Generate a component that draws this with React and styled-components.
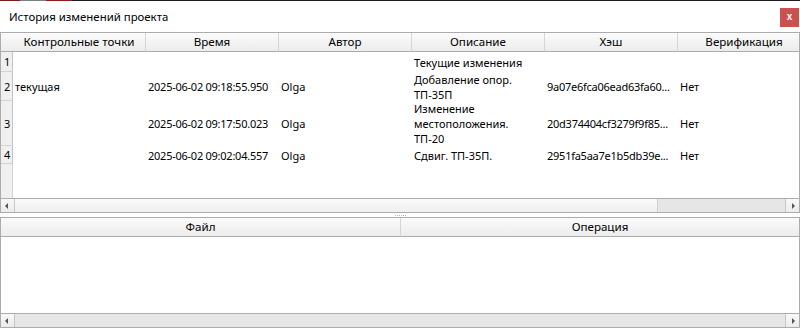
import React from 'react';
import styled, { createGlobalStyle } from 'styled-components';

const GlobalStyle = createGlobalStyle`
  html, body {
    margin: 0;
    padding: 0;
    background: #fff;
  }
  body {
    font-family: "Noto Sans", "Segoe UI", sans-serif;
    font-size: 11px;
    color: #000;
  }
`;

const Window = styled.div`
  width: 800px;
  height: 328px;
  display: flex;
  flex-direction: column;
  overflow: hidden;
  background: #fff;
`;

const AccentStrip = styled.div`
  display: flex;
  height: 1px;
  flex-shrink: 0;
`;

const AccentSegment = styled.div`
  width: ${(p) => p.$w || 0}px;
  flex: ${(p) => (p.$grow ? 1 : 'none')};
  background: ${(p) => p.$color};
`;

const TitleBar = styled.div`
  height: 31px;
  flex-shrink: 0;
  display: flex;
  align-items: center;
  justify-content: space-between;
  padding: 0 1px 0 9px;
`;

const Title = styled.span`
  font-size: 11.4px;
  margin-top: -1px;
`;

const CloseButton = styled.button`
  width: 19px;
  height: 19px;
  margin-top: 2px;
  padding: 0 0 2px;
  border: none;
  background: #c9514f;
  color: #fff;
  font: bold 10px "Liberation Sans", Arial, sans-serif;
  display: flex;
  align-items: center;
  justify-content: center;
`;

const Pane = styled.div`
  height: ${(p) => p.$h}px;
  flex-shrink: 0;
  box-sizing: border-box;
  border: 1px solid #acacac;
  display: flex;
  flex-direction: column;
`;

const Viewport = styled.div`
  flex: 1;
  overflow: hidden;
  background: ${(p) =>
    p.$vheader
      ? 'linear-gradient(to right, #f0f0f0 0, #f0f0f0 11px, #d4d4d4 11px, #d4d4d4 12px, #fff 12px)'
      : '#fff'};
`;

const Grid = styled.div`
  display: grid;
  grid-template-columns: ${(p) => p.$cols};
  width: max-content;
`;

const HeaderCell = styled.div`
  height: 17px;
  border-bottom: 1px solid #acacac;
  border-right: ${(p) => (p.$plain ? 'none' : '1px solid #d5d5d5')};
  background: linear-gradient(to bottom, #fbfbfb, #ececec);
  display: flex;
  align-items: center;
  justify-content: center;
  white-space: nowrap;
  font-size: 11.6px;
  padding-bottom: 1px;
  box-sizing: content-box;
`;

const RowNumber = styled.div`
  height: ${(p) => p.$h}px;
  box-sizing: border-box;
  background: #f0f0f0;
  border-bottom: 1px solid #d4d4d4;
  border-right: 1px solid #c4c4c4;
  display: flex;
  align-items: center;
  padding-left: 3px;
`;

const Cell = styled.div`
  height: ${(p) => p.$h}px;
  display: flex;
  flex-direction: column;
  justify-content: center;
  padding: 0 2px;
  line-height: 15px;
  letter-spacing: ${(p) => (p.$tight ? '-0.25px' : 'normal')};
  white-space: nowrap;
  overflow: hidden;
`;

const ScrollBar = styled.div`
  height: 13px;
  flex-shrink: 0;
  border-top: 1px solid #acacac;
  display: flex;
  background: #e6e6e6;
`;

const ArrowButton = styled.div`
  width: 13px;
  flex-shrink: 0;
  background: linear-gradient(to bottom, #f8f8f8, #ececec);
  border-left: ${(p) => (p.$dir === 'right' ? '1px solid #c8c8c8' : 'none')};
  border-right: ${(p) => (p.$dir === 'left' ? '1px solid #c8c8c8' : 'none')};
  display: flex;
  align-items: center;
  justify-content: center;

  &::before {
    content: '';
    width: 0;
    height: 0;
    border-top: 3px solid transparent;
    border-bottom: 3px solid transparent;
    ${(p) =>
      p.$dir === 'left'
        ? 'border-right: 3px solid #555; margin-left: -3px;'
        : 'border-left: 3px solid #555; margin-left: 2px;'}
  }
`;

const Thumb = styled.div`
  width: ${(p) => p.$w}px;
  flex-shrink: 0;
  box-sizing: border-box;
  background: linear-gradient(to bottom, #fafafa, #efefef);
  border-right: 1px solid #cfcfcf;
`;

const Track = styled.div`
  flex: 1;
`;

const SplitterHandle = styled.div`
  height: 4px;
  flex-shrink: 0;
  display: flex;
  justify-content: center;
  align-items: center;

  &::before {
    content: '';
    width: 12px;
    height: 1px;
    margin-left: 1px;
    background: repeating-linear-gradient(to right, #b4b4b4 0 1px, transparent 1px 2px);
  }
`;

const checkpoints = [
  { n: 1, h: 20, point: '', time: '', author: '', desc: ['Текущие изменения'], hash: '', verified: '' },
  {
    n: 2,
    h: 29,
    point: 'текущая',
    time: '2025-06-02 09:18:55.950',
    author: 'Olga',
    desc: ['Добавление опор.', 'ТП-35П'],
    hash: '9a07e6fca06ead63fa60...',
    verified: 'Нет',
  },
  {
    n: 3,
    h: 45,
    point: '',
    time: '2025-06-02 09:17:50.023',
    author: 'Olga',
    desc: ['Изменение', 'местоположения.', 'ТП-20'],
    hash: '20d374404cf3279f9f85...',
    verified: 'Нет',
  },
  {
    n: 4,
    h: 18,
    point: '',
    time: '2025-06-02 09:02:04.557',
    author: 'Olga',
    desc: ['Сдвиг. ТП-35П.'],
    hash: '2951fa5aa7e1b5db39e...',
    verified: 'Нет',
  },
];

const historyColumns = ['Контрольные точки', 'Время', 'Автор', 'Описание', 'Хэш', 'Верификация'];

const HistoryTable = () => (
  <Pane $h={181}>
    <Viewport $vheader>
      <Grid $cols="12px repeat(6, 133px)">
        <HeaderCell $plain />
        {historyColumns.map((c) => (
          <HeaderCell key={c}>{c}</HeaderCell>
        ))}
        {checkpoints.map((r) => (
          <React.Fragment key={r.n}>
            <RowNumber $h={r.h}>{r.n}</RowNumber>
            <Cell $h={r.h}>{r.point}</Cell>
            <Cell $h={r.h} $tight>{r.time}</Cell>
            <Cell $h={r.h}>{r.author}</Cell>
            <Cell $h={r.h}>
              {r.desc.map((line) => (
                <span key={line}>{line}</span>
              ))}
            </Cell>
            <Cell $h={r.h} $tight>{r.hash}</Cell>
            <Cell $h={r.h}>{r.verified}</Cell>
          </React.Fragment>
        ))}
      </Grid>
    </Viewport>
    <ScrollBar>
      <ArrowButton $dir="left" />
      <Thumb $w={643} />
      <Track />
      <ArrowButton $dir="right" />
    </ScrollBar>
  </Pane>
);

const FilesTable = () => (
  <Pane $h={111}>
    <Viewport>
      <Grid $cols="400px 398px">
        <HeaderCell>Файл</HeaderCell>
        <HeaderCell $plain>Операция</HeaderCell>
      </Grid>
    </Viewport>
    <ScrollBar>
      <ArrowButton $dir="left" />
      <Track />
      <ArrowButton $dir="right" />
    </ScrollBar>
  </Pane>
);

export default function App() {
  return (
    <>
      <GlobalStyle />
      <Window>
        <AccentStrip>
          <AccentSegment $w={20} $color="#7c1d1d" />
          <AccentSegment $w={26} $color="#7e7e7e" />
          <AccentSegment $w={26} $color="#8e1c1c" />
          <AccentSegment $grow $color="#1c1c1c" />
        </AccentStrip>
        <TitleBar>
          <Title>История изменений проекта</Title>
          <CloseButton>x</CloseButton>
        </TitleBar>
        <HistoryTable />
        <SplitterHandle />
        <FilesTable />
      </Window>
    </>
  );
}
